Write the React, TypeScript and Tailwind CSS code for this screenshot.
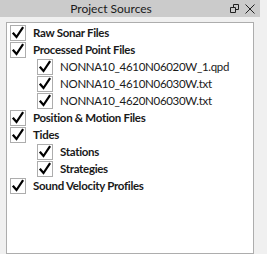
import React from "react";

type Item = { label: string; bold?: boolean; level: number };

const items: Item[] = [
  { label: "Raw Sonar Files", bold: true, level: 0 },
  { label: "Processed Point Files", bold: true, level: 0 },
  { label: "NONNA10_4610N06020W_1.qpd", level: 1 },
  { label: "NONNA10_4610N06030W.txt", level: 1 },
  { label: "NONNA10_4620N06030W.txt", level: 1 },
  { label: "Position & Motion Files", bold: true, level: 0 },
  { label: "Tides", bold: true, level: 0 },
  { label: "Stations", bold: true, level: 1 },
  { label: "Strategies", bold: true, level: 1 },
  { label: "Sound Velocity Profiles", bold: true, level: 0 },
];

function CheckBox() {
  return (
    <div className="w-[16px] h-[16px] shrink-0 border border-[#adadad] bg-white flex items-center justify-center">
      <svg width="14" height="14" viewBox="0 0 14 14">
        <path d="M2.5 7.5 L5.5 11 L11.5 2" fill="none" stroke="#000" strokeWidth="2.2" strokeLinecap="square" strokeLinejoin="miter" />
      </svg>
    </div>
  );
}

export default function App() {
  return (
    <div className="w-[267px] h-[254px] bg-[#f0f0f0] overflow-hidden flex flex-col font-['Lato',sans-serif]">
      {/* Title bar */}
      <div className="w-[260px] h-[17px] shrink-0 bg-[#cbcbcb] flex items-center">
        <div className="w-[222px] text-center text-[12px] leading-none text-[#1a1a1a]">Project Sources</div>
        <div className="flex items-center gap-[6px] ml-[8px]">
          <svg width="9" height="9" viewBox="0 0 9 9">
            <path d="M0.5 3.5 H5.5 V8.5 H0.5 Z M3.5 3.5 V0.5 H8.5 V5.5 H5.5" fill="none" stroke="#222" strokeWidth="1" />
          </svg>
          <svg width="10" height="10" viewBox="0 0 10 10">
            <path d="M0.5 0.5 L9.5 9.5 M9.5 0.5 L0.5 9.5" fill="none" stroke="#222" strokeWidth="1" />
          </svg>
        </div>
      </div>

      {/* Tree panel */}
      <div className="mt-[5px] ml-[6px] w-[248px] flex-1 bg-white border border-[#adadad] pt-[1px] pl-[3px]">
        {items.map((it, i) => (
          <div key={i} className={`h-[17px] flex items-center ${it.level === 1 ? "pl-[27px]" : ""}`}>
            <CheckBox />
            <span className={`ml-[7px] pt-[1px] text-[11.5px] tracking-[-0.3px] leading-none whitespace-nowrap text-[#1a1a1a] ${it.bold ? "font-bold" : ""}`}>
              {it.label}
            </span>
          </div>
        ))}
      </div>
    </div>
  );
}
